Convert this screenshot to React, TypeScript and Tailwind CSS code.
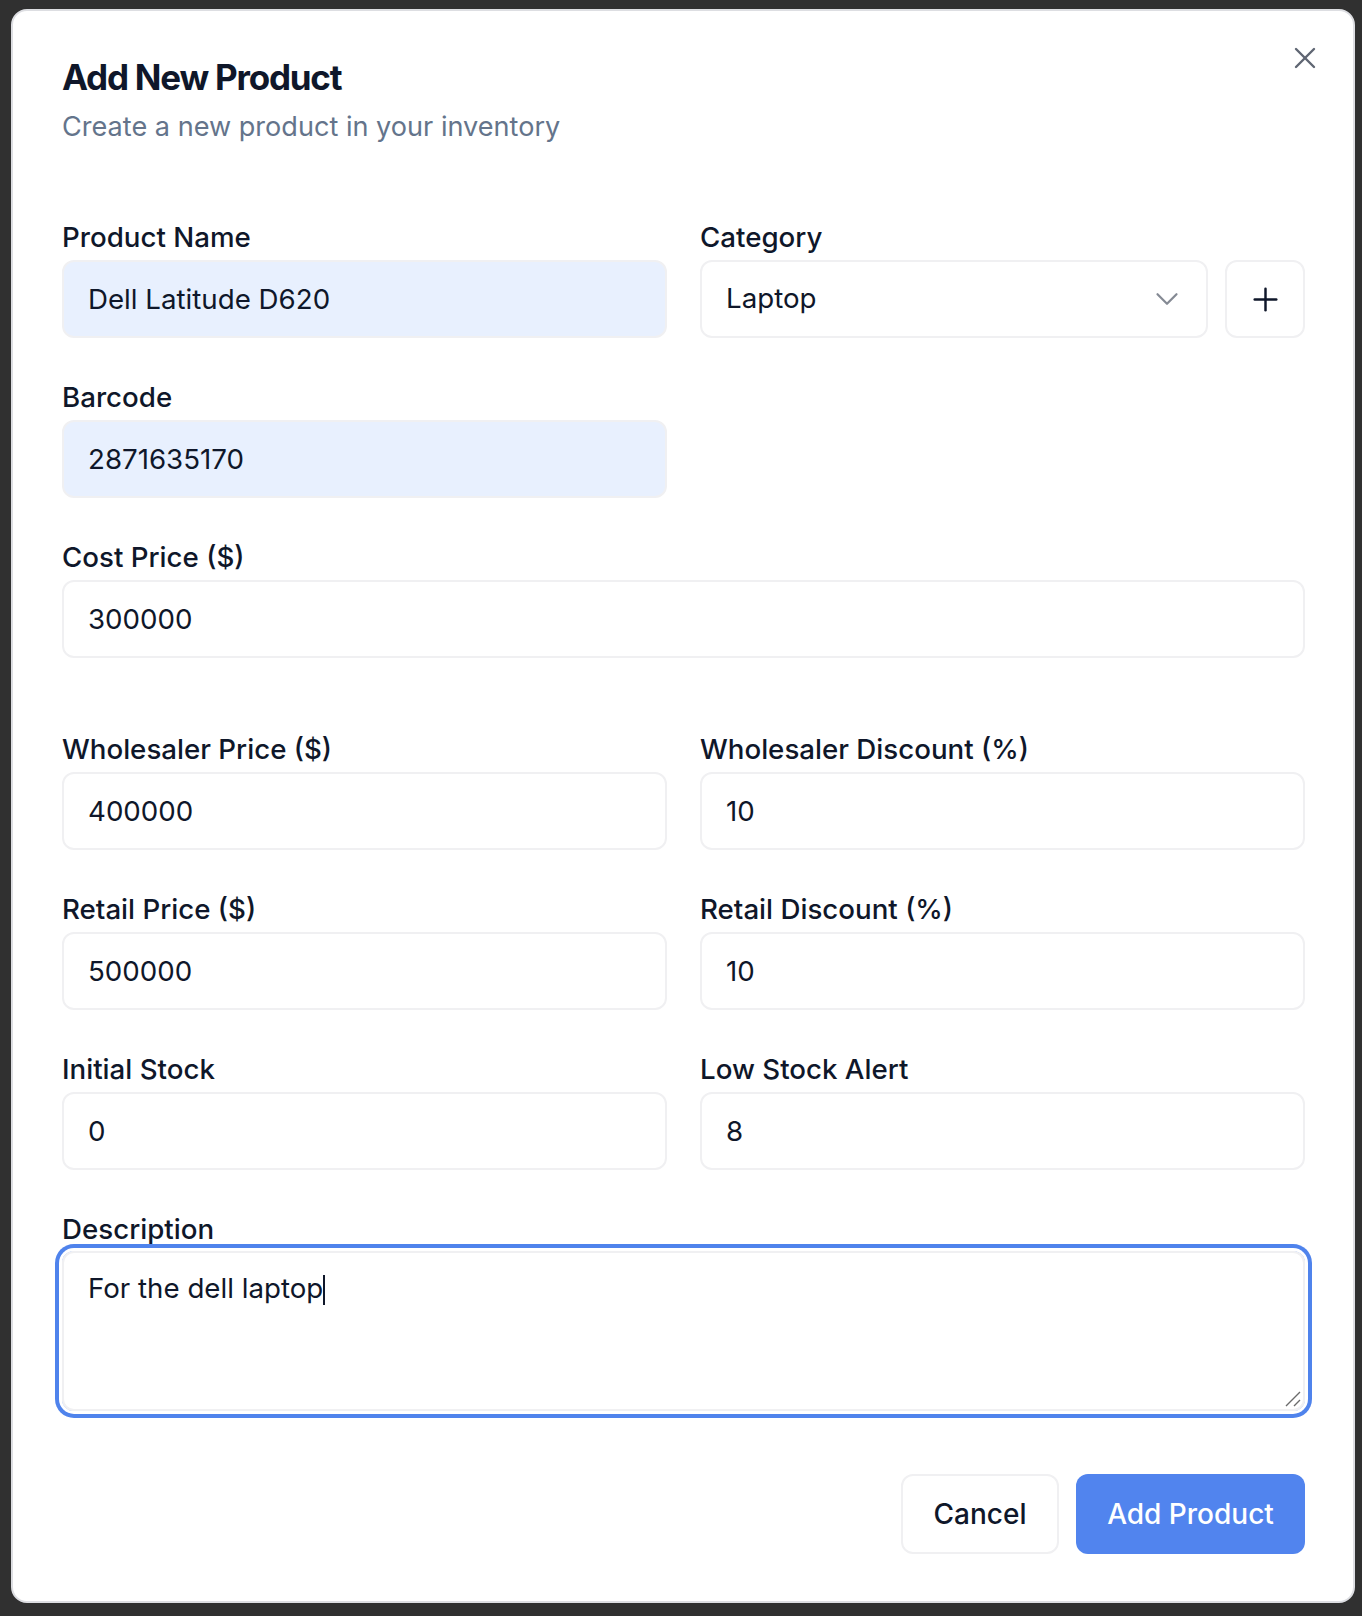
import React from 'react';
import { X, ChevronDown, Plus } from 'lucide-react';

const labelCls = 'block text-[27.7px] leading-[26px] font-medium text-[#0f172a]';
const inputBase =
  'block h-[78px] w-full rounded-[12px] border-2 border-[#f0f0f2] px-[24px] text-[27.7px] text-[#0f172a] outline-none';

type FieldProps = {
  label: string;
  value: string;
  autofill?: boolean;
};

const Field = ({ label, value, autofill }: FieldProps) => (
  <div className="flex flex-col gap-[10px]">
    <label className={labelCls}>{label}</label>
    <input
      readOnly
      value={value}
      className={inputBase + (autofill ? ' bg-[#e8f0fe]' : ' bg-white')}
    />
  </div>
);

const App = () => {
  return (
    <div className="w-[1362px] h-[1616px] bg-[#303030] pt-[9px] pl-[11px] font-[Inter,'Liberation_Sans',sans-serif]">
      <div className="relative w-[1344px] h-[1594px] rounded-[16px] border-2 border-[#dddee2] bg-white pl-[49px] pr-[48px] pt-[44px]">
        <button className="absolute right-[30px] top-[29px] text-[#5f6673]">
          <X size={36} strokeWidth={1.6} />
        </button>

        <h2 className="text-[35px] leading-[44px] font-bold tracking-[-0.035em] text-[#0f172a]">
          Add New Product
        </h2>
        <p className="mt-[10px] text-[27.1px] leading-[36px] text-[#64748b]">
          Create a new product in your inventory
        </p>

        <div className="mt-[79px] grid grid-cols-2 gap-x-[33px] gap-y-[46px]">
          <Field label="Product Name" value="Dell Latitude D620" autofill />
          <div className="flex flex-col gap-[10px]">
            <label className={labelCls}>Category</label>
            <div className="flex gap-[17px]">
              <div className="flex h-[78px] flex-1 items-center justify-between rounded-[12px] border-2 border-[#f0f0f2] pl-[24px] pr-[20px] text-[27.7px] text-[#0f172a]">
                <span>Laptop</span>
                <ChevronDown size={38} strokeWidth={1.4} className="text-[#858a94]" />
              </div>
              <button className="flex h-[78px] w-[80px] items-center justify-center rounded-[12px] border-2 border-[#f0f0f2] text-[#0f172a]">
                <Plus size={37} strokeWidth={1.6} />
              </button>
            </div>
          </div>

          <Field label="Barcode" value="2871635170" autofill />
          <div />

          <div className="col-span-2">
            <Field label="Cost Price ($)" value="300000" />
          </div>
        </div>

        <div className="mt-[78px] grid grid-cols-2 gap-x-[33px] gap-y-[46px]">
          <Field label="Wholesaler Price ($)" value="400000" />
          <Field label="Wholesaler Discount (%)" value="10" />
          <Field label="Retail Price ($)" value="500000" />
          <Field label="Retail Discount (%)" value="10" />
          <Field label="Initial Stock" value="0" />
          <Field label="Low Stock Alert" value="8" />
        </div>

        <div className="mt-[46px] flex flex-col gap-[9px]">
          <label className={labelCls}>Description</label>
          <div className="relative h-[160px] w-full rounded-[12px] border-2 border-[#f0f0f2] px-[24px] pt-[17px] text-[27.7px] leading-[36px] text-[#0f172a] ring-[4px] ring-[#4f83ec] ring-offset-[3px]">
            <span>For the dell laptop</span>
            <span className="inline-block h-[30px] w-[2px] bg-[#0f172a] align-middle" />
            <svg
              className="absolute bottom-[2px] right-[2px]"
              width="16"
              height="16"
              viewBox="0 0 16 16"
            >
              <path d="M1 15 L15 1 M9 15 L15 9" stroke="#6b6b6b" strokeWidth="1.4" />
            </svg>
          </div>
        </div>

        <div className="mt-[63px] flex justify-end gap-[17px]">
          <button className="h-[80px] w-[158px] rounded-[12px] border-2 border-[#f0f0f2] bg-white text-[28px] font-medium text-[#0f172a]">
            Cancel
          </button>
          <button className="h-[80px] w-[229px] rounded-[12px] bg-[#5184ee] text-[28px] font-medium text-white">
            Add Product
          </button>
        </div>
      </div>
    </div>
  );
};

export default App;
